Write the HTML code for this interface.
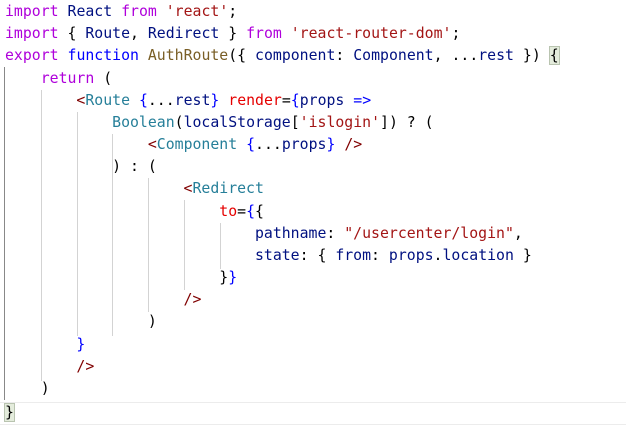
<!DOCTYPE html>
<html><head><style>
body{margin:0;width:626px;height:428px;background:#fff;position:relative;overflow:hidden;font-family:"DejaVu Sans Mono","Liberation Mono",monospace;font-size:14.84px}
.l{position:absolute;left:5px;height:22.17px;line-height:22.17px;white-space:pre;color:#000}
.g{position:absolute;width:1px;background:#d3d3d3}
.k{color:#af00db}.v{color:#001080}.s{color:#a31515}.f{color:#795e26}.b{color:#0000ff}.t{color:#267f99}.r{color:#800000}.a{color:#e50000}
.m{background:#e4ecdc;outline:1px solid #b9c4b0}
</style></head><body>
<div style="position:absolute;left:0;top:402px;width:626px;height:21px;border-top:1.5px solid #ececec;border-bottom:1.5px solid #ececec"></div>
<div class="g" style="left:4px;top:67px;height:333px;background:#888"></div>
<div class="g" style="left:41px;top:90px;height:291px"></div>
<div class="g" style="left:77px;top:112px;height:224px"></div>
<div class="g" style="left:112px;top:134px;height:202px"></div>
<div class="g" style="left:148px;top:178px;height:134px"></div>
<div class="g" style="left:184px;top:200px;height:90px"></div>
<div class="g" style="left:220px;top:223px;height:46px"></div>
<div class="l" style="top:1px"><span class="k">import</span> <span class="v">React</span> <span class="k">from</span> <span class="s">'react'</span>;</div>
<div class="l" style="top:23.2px"><span class="k">import</span> { <span class="v">Route</span>, <span class="v">Redirect</span> } <span class="k">from</span> <span class="s">'react-router-dom'</span>;</div>
<div class="l" style="top:45.3px"><span class="k">export</span> <span class="b">function</span> <span class="f">AuthRoute</span>({ <span class="v">component</span>: <span class="v">Component</span>, ...<span class="v">rest</span> }) <span class="m">{</span></div>
<div class="l" style="top:67.5px">    <span class="k">return</span> (</div>
<div class="l" style="top:89.7px">        <span class="r">&lt;</span><span class="t">Route</span> <span class="b">{</span>...<span class="v">rest</span><span class="b">}</span> <span class="a">render</span>=<span class="b">{</span><span class="v">props</span> <span class="b">=&gt;</span></div>
<div class="l" style="top:111.9px">            <span class="t">Boolean</span>(<span class="v">localStorage</span>[<span class="s">'islogin'</span>]) ? (</div>
<div class="l" style="top:134px">                <span class="r">&lt;</span><span class="t">Component</span> <span class="b">{</span>...<span class="v">props</span><span class="b">}</span> <span class="r">/&gt;</span></div>
<div class="l" style="top:156.2px">            ) : (</div>
<div class="l" style="top:178.4px">                    <span class="r">&lt;</span><span class="t">Redirect</span></div>
<div class="l" style="top:200.5px">                        <span class="a">to</span>=<span class="b">{</span>{</div>
<div class="l" style="top:222.7px">                            <span class="v">pathname</span>: <span class="s">"/usercenter/login"</span>,</div>
<div class="l" style="top:244.9px">                            <span class="v">state</span>: { <span class="v">from</span>: <span class="v">props</span>.<span class="v">location</span> }</div>
<div class="l" style="top:267px">                        }<span class="b">}</span></div>
<div class="l" style="top:289.2px">                    <span class="r">/&gt;</span></div>
<div class="l" style="top:311.4px">                )</div>
<div class="l" style="top:333.6px">        <span class="b">}</span></div>
<div class="l" style="top:355.7px">        <span class="r">/&gt;</span></div>
<div class="l" style="top:377.9px">    )</div>
<div class="l" style="top:401.5px;left:5px"><span class="m">}</span></div>
</body></html>
